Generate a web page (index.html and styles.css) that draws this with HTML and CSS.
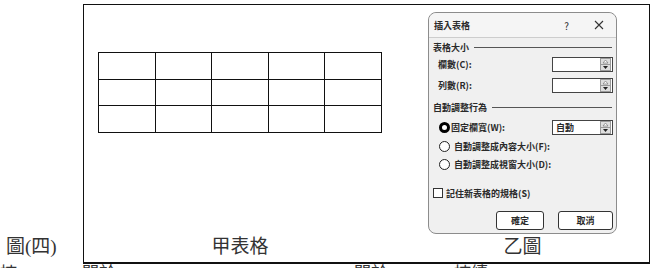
FILE: index.html
```html
<!DOCTYPE html>
<html lang="zh-Hant">
<head>
    <meta charset="UTF-8">
    <meta name="viewport" content="width=device-width, initial-scale=1.0">
    <title>圖(四)</title>
    <link rel="stylesheet" href="styles.css">
</head>
<body>

    <div class="page">
        <div class="fig-label">圖(四)</div>

        <div class="frame">
            <div class="panel panel-left">
                <table class="grid">
                    <tr><td></td><td></td><td></td><td></td><td></td></tr>
                    <tr><td></td><td></td><td></td><td></td><td></td></tr>
                    <tr><td></td><td></td><td></td><td></td><td></td></tr>
                </table>
                <div class="caption">甲表格</div>
            </div>

            <div class="panel panel-right">
                <div class="dialog">
                    <div class="dlg-title">
                        <span class="dlg-name">插入表格</span>
                        <span class="dlg-help">?</span>
                        <svg class="dlg-close" width="10" height="10" viewBox="0 0 10 10">
                            <path d="M1 1 L9 9 M9 1 L1 9" stroke="#333" stroke-width="1.1" fill="none"/>
                        </svg>
                    </div>

                    <div class="dlg-body">
                        <div class="group-head">表格大小</div>
                        <div class="field">
                            <span>欄數(C):</span>
                            <div class="spin-input">
                                <span class="spin-value"></span>
                                <svg class="spin" width="11" height="13" viewBox="0 0 11 13">
                                    <rect x="0.5" y="0.5" width="10" height="12" fill="#dedede" stroke="#9a9a9a"/>
                                    <line x1="1" y1="6.5" x2="10" y2="6.5" stroke="#9a9a9a"/>
                                    <path d="M3 5 L5.5 2 L8 5 Z" fill="#fff" stroke="#777" stroke-width="0.7"/>
                                    <path d="M3 8 L5.5 11 L8 8 Z" fill="#222"/>
                                </svg>
                            </div>
                        </div>
                        <div class="field field-gap">
                            <span>列數(R):</span>
                            <div class="spin-input">
                                <span class="spin-value"></span>
                                <svg class="spin" width="11" height="13" viewBox="0 0 11 13">
                                    <rect x="0.5" y="0.5" width="10" height="12" fill="#dedede" stroke="#9a9a9a"/>
                                    <line x1="1" y1="6.5" x2="10" y2="6.5" stroke="#9a9a9a"/>
                                    <path d="M3 5 L5.5 2 L8 5 Z" fill="#fff" stroke="#777" stroke-width="0.7"/>
                                    <path d="M3 8 L5.5 11 L8 8 Z" fill="#222"/>
                                </svg>
                            </div>
                        </div>

                        <div class="group-head group-head-tall">自動調整行為</div>
                        <div class="option option-first">
                            <span class="radio checked"></span>
                            <span class="option-text">固定欄寬(W):</span>
                            <div class="spin-input">
                                <span class="spin-value">自動</span>
                                <svg class="spin" width="11" height="13" viewBox="0 0 11 13">
                                    <rect x="0.5" y="0.5" width="10" height="12" fill="#dedede" stroke="#9a9a9a"/>
                                    <line x1="1" y1="6.5" x2="10" y2="6.5" stroke="#9a9a9a"/>
                                    <path d="M3 5 L5.5 2 L8 5 Z" fill="#fff" stroke="#777" stroke-width="0.7"/>
                                    <path d="M3 8 L5.5 11 L8 8 Z" fill="#222"/>
                                </svg>
                            </div>
                        </div>
                        <div class="option option-second">
                            <span class="radio"></span>
                            <span class="option-text">自動調整成內容大小(F):</span>
                        </div>
                        <div class="option option-third">
                            <span class="radio"></span>
                            <span class="option-text">自動調整成視窗大小(D):</span>
                        </div>

                        <div class="remember">
                            <span class="checkbox"></span>
                            <span>記住新表格的規格(S)</span>
                        </div>

                        <div class="buttons">
                            <button class="btn btn-ok">確定</button>
                            <button class="btn btn-cancel">取消</button>
                        </div>
                    </div>
                </div>
                <div class="caption">乙圖</div>
            </div>
        </div>
    </div>

    <div class="next-line">
        <span class="cut cut-a">持</span>
        <span class="cut cut-b">關於</span>
        <span class="cut cut-c">關於</span>
        <span class="cut cut-d">持續</span>
    </div>

</body>
</html>
```

FILE: styles.css
```css
body {
    margin: 0;
    background-color: #fff;
    color: #222;
    overflow: hidden;
    font-family: "Liberation Serif", "Noto Sans CJK TC", serif;
}
.page {
    display: flex;
    margin-top: 4px;
}
.fig-label {
    width: 83px;
    align-self: flex-end;
    padding-left: 6px;
    padding-bottom: 5px;
    box-sizing: border-box;
    font-size: 19px;
    line-height: 24px;
    color: #333;
}
.frame {
    display: flex;
    width: 567px;
    height: 260px;
    box-sizing: border-box;
    border: 1px solid #111;
    border-bottom-width: 2px;
}
.panel {
    display: flex;
    flex-direction: column;
}
.panel-left {
    width: 312px;
    padding-left: 14px;
    padding-top: 47px;
    box-sizing: border-box;
}
.panel-right {
    flex: 1;
    align-items: center;
}
.caption {
    margin-top: auto;
    padding-bottom: 3px;
    font-size: 19px;
    line-height: 24px;
    color: #333;
    text-align: center;
    align-self: stretch;
    padding-right: 14px;
}
.panel-right .caption {
    padding-right: 0;
}
.grid {
    border-collapse: collapse;
    width: 284px;
    height: 81px;
}
.grid td {
    border: 1px solid #111;
    padding: 0;
}

/* dialog */
.dialog {
    width: 189px;
    height: 222px;
    margin-top: 7px;
    box-sizing: border-box;
    border: 1px solid #8c8c8c;
    border-radius: 8px;
    background-color: #f0f0f0;
    font-family: "Noto Sans CJK TC", sans-serif;
    font-size: 9px;
    font-weight: 700;
    color: #2a2a2a;
    display: flex;
    flex-direction: column;
}
.dlg-title {
    height: 24px;
    display: flex;
    align-items: center;
    padding: 0 12px 0 5px;
    background-color: #f5f5f5;
    border-bottom: 1px solid #cdcdcd;
    border-radius: 8px 8px 0 0;
}
.dlg-name {
    flex: 1;
}
.dlg-help {
    font-weight: 400;
    font-size: 10px;
    margin-right: 25px;
}
.dlg-body {
    padding: 0 3px 0 4px;
    display: flex;
    flex-direction: column;
}
.group-head {
    height: 18px;
    display: flex;
    align-items: center;
}
.group-head::after {
    content: "";
    flex: 1;
    height: 1px;
    margin-left: 5px;
    margin-right: 1px;
    background-color: #555;
}
.group-head-tall {
    height: 26px;
}
.field {
    height: 17px;
    display: flex;
    align-items: center;
    justify-content: space-between;
    padding-left: 5px;
}
.field-gap {
    margin-top: 4px;
}
.spin-input {
    width: 61px;
    height: 15px;
    box-sizing: border-box;
    border: 1px solid #444;
    background-color: #fff;
    display: flex;
    align-items: center;
    padding-right: 1px;
}
.spin-value {
    flex: 1;
    padding-left: 3px;
}
.spin {
    display: block;
}
.option {
    display: flex;
    align-items: center;
    padding-left: 6px;
}
.option-first {
    height: 15px;
}
.option-first .option-text {
    flex: 1;
    margin-left: 1px;
}
.option-second {
    height: 18px;
    margin-top: 2px;
}
.option-third {
    height: 19px;
}
.option-text {
    margin-left: 4px;
}
.radio {
    width: 11px;
    height: 11px;
    box-sizing: border-box;
    border: 1px solid #222;
    border-radius: 50%;
    background-color: #fff;
}
.radio.checked {
    border: 3px solid #000;
}
.remember {
    height: 18px;
    margin-top: 10px;
    display: flex;
    align-items: center;
}
.checkbox {
    width: 10px;
    height: 10px;
    box-sizing: border-box;
    border: 1px solid #333;
    background-color: #fff;
    margin-right: 3px;
}
.buttons {
    margin-top: 9px;
    display: flex;
    justify-content: flex-end;
    gap: 14px;
}
.btn {
    height: 19px;
    padding: 0;
    border: 1px solid #333;
    border-radius: 3px;
    background-color: #fff;
    font-family: "Noto Sans CJK TC", sans-serif;
    font-size: 9px;
    font-weight: 700;
    color: #2a2a2a;
}
.btn-ok {
    width: 48px;
}
.btn-cancel {
    width: 55px;
}

/* next paragraph, cut off by the window */
.next-line {
    margin-top: -4px;
    display: flex;
    font-family: "Noto Sans CJK TC", sans-serif;
    font-size: 17px;
    line-height: 24px;
    color: #333;
}
.cut-a {
    width: 82px;
}
.cut-b {
    width: 272px;
}
.cut-c {
    width: 100px;
}
```
